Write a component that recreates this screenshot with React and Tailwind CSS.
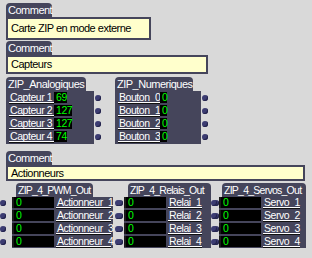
import React from "react";

const F = { fontFamily: '"Liberation Sans", Arial, sans-serif' };
const TXT = "text-[11px] tracking-[-0.5px] whitespace-nowrap";
const LTXT = "text-[10.5px] tracking-[-0.45px] whitespace-nowrap";

function Dot({ className }) {
  return (
    <span
      className={
        "absolute top-1/2 -translate-y-1/2 w-[6px] h-[6px] rounded-full bg-[#3c3c72] shadow-[inset_-1px_-1px_0_#24244c] " +
        className
      }
    />
  );
}

function Tab({ children, className, small }) {
  return (
    <div
      className={
        "h-[14px] rounded-t-[4px] bg-[#45455b] text-white leading-[14px] pl-[2px] " +
        (small ? "text-[10.5px] tracking-[-0.75px] whitespace-nowrap" : TXT) +
        " " +
        className
      }
    >
      {children}
    </div>
  );
}

function Comment({ text, boxClass }) {
  return (
    <div className="flex flex-col items-start">
      <Tab className="w-[46px]">Comment</Tab>
      <div
        className={
          "border-2 border-[#45455b] bg-[#ffffcc] text-black pl-[3px] flex items-center " +
          TXT +
          " " +
          boxClass
        }
      >
        {text}
      </div>
    </div>
  );
}

function Label({ children, className }) {
  return (
    <div
      className={
        "flex-none h-[11px] text-white leading-[10px] border-b border-white shadow-[0_1px_0_#111] " +
        LTXT +
        " " +
        className
      }
    >
      {children}
    </div>
  );
}

function Value({ children, className }) {
  return (
    <div
      className={
        "flex-none h-[11px] bg-black text-[#00ff00] leading-[11px] pl-[2px] " +
        LTXT +
        " " +
        className
      }
    >
      {children}
    </div>
  );
}

function InPanel({ title, tabW, bodyW, labelW, rows }) {
  return (
    <div className="flex flex-col items-start">
      <Tab className={tabW}>{title}</Tab>
      <div className={"bg-[#45455b] pl-[3px] pt-[1px] pb-[2px] flex flex-col gap-[2px] " + bodyW}>
        {rows.map(([l, v]) => (
          <div key={l} className="relative flex items-end h-[11px]">
            <Label className={"pl-[1px] " + labelW}>{l}</Label>
            <Value className="flex-1">{v}</Value>
            <Dot className="-right-[7px]" />
          </div>
        ))}
      </div>
    </div>
  );
}

function OutPanel({ title, tabClass, bodyW, labelW, rows, leftDot, rightDot = true, className }) {
  return (
    <div className={"flex flex-col items-start " + className}>
      <Tab small className={tabClass}>
        {title}
      </Tab>
      <div className={"bg-[#45455b] pb-[1px] flex flex-col gap-[2px] " + bodyW}>
        {rows.map((l) => (
          <div key={l} className="relative flex items-end h-[11px]">
            <Dot className={leftDot} />
            <Value className="w-[42px] border-l-2 border-[#1a1a1a]">0</Value>
            <Label className={"ml-[2px] pl-[1px] " + labelW}>{l}</Label>
            {rightDot && <Dot className="-right-[8px]" />}
          </div>
        ))}
      </div>
    </div>
  );
}

export default function App() {
  return (
    <div
      className="w-[312px] h-[258px] bg-[#d9d9d9] overflow-hidden pt-[3px] pl-[6px] flex flex-col"
      style={F}
    >
      <Comment text="Carte ZIP en mode externe" boxClass="w-[145px] h-[23px]" />
      <div className="mt-[1px]">
        <Comment text="Capteurs" boxClass="w-[202px] h-[19px]" />
      </div>
      <div className="mt-[3px] flex items-start">
        <InPanel
          title="ZIP_Analogiques"
          tabW="w-[80px]"
          bodyW="w-[88px]"
          labelW="w-[45px]"
          rows={[
            ["Capteur 1", "69"],
            ["Capteur 2", "127"],
            ["Capteur 3", "127"],
            ["Capteur 4", "74"],
          ]}
        />
        <div className="ml-[21px]">
          <InPanel
            title="ZIP_Numeriques"
            tabW="w-[78px]"
            bodyW="w-[86px]"
            labelW="w-[42px]"
            rows={[
              ["Bouton_0", "0"],
              ["Bouton_1", "0"],
              ["Bouton_2", "0"],
              ["Bouton_3", "0"],
            ]}
          />
        </div>
      </div>
      <div className="mt-[7px]">
        <Comment text="Actionneurs" boxClass="w-[299px] h-[16px]" />
      </div>
      <div className="mt-[2px] -ml-[6px] flex items-start">
        <OutPanel
          className="ml-[12px]"
          title="ZIP_4_PWM_Out"
          tabClass="ml-[4px] w-[77px]"
          bodyW="w-[101px]"
          labelW="w-[55px]"
          leftDot="-left-[12px]"
          rows={["Actionneur_1", "Actionneur_2", "Actionneur_3", "Actionneur_4"]}
        />
        <OutPanel
          className="ml-[11px]"
          title="ZIP_4_Relais_Out"
          tabClass="ml-[4px] w-[83px]"
          bodyW="w-[87px]"
          labelW="w-[34px]"
          leftDot="-left-[7px]"
          rows={["Relai_1", "Relai_2", "Relai_3", "Relai_4"]}
        />
        <OutPanel
          className="ml-[8px]"
          title="ZIP_4_Servos_Out"
          tabClass="ml-[3px] w-[84px]"
          bodyW="w-[87px]"
          labelW="w-[37px]"
          leftDot="-left-[8px]"
          rightDot={false}
          rows={["Servo_1", "Servo_2", "Servo_3", "Servo_4"]}
        />
      </div>
    </div>
  );
}
